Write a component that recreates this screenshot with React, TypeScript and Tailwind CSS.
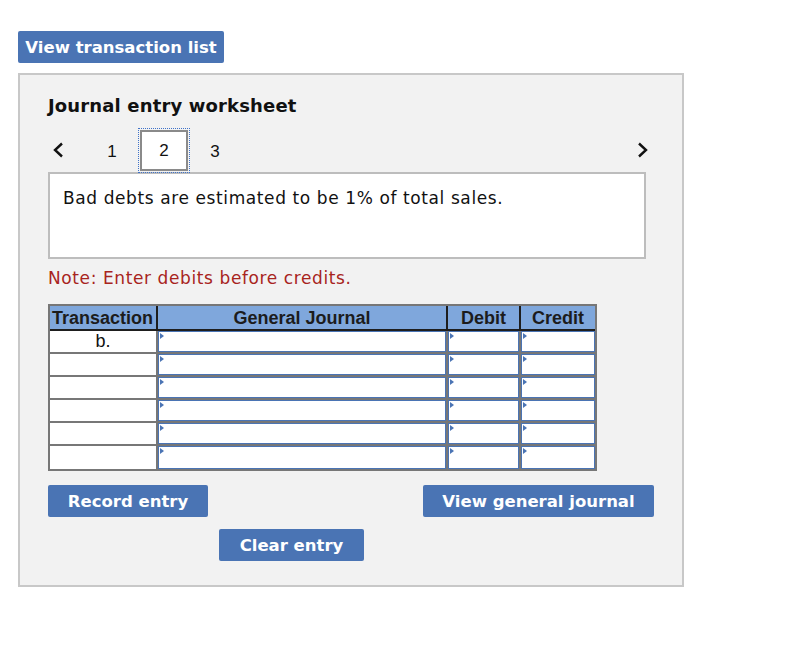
import React from "react";

function Chevron({ dir }: { dir: "left" | "right" }) {
  return (
    <svg width="12" height="16" viewBox="0 0 12 16" className="block">
      <path
        d={dir === "left" ? "M10 1.5 L3 8 L10 14.5" : "M2 1.5 L9 8 L2 14.5"}
        fill="none"
        stroke="#111"
        strokeWidth="2.4"
      />
    </svg>
  );
}

function InputCell({ w, last }: { w: string; last?: boolean }) {
  return (
    <div className={`${w} h-full bg-white ${last ? "" : "border-r-2 border-[#777]"}`}>
      <div className="relative h-full border border-[#4a74b4]">
        <span className="absolute left-[1px] top-[1px] w-0 h-0 border-y-[3px] border-y-transparent border-l-[4px] border-l-[#4a74b4]" />
      </div>
    </div>
  );
}

const rows = ["b.", "", "", "", "", ""];

export default function App() {
  return (
    <div className="min-h-[660px] w-[794px] bg-white pt-[31px] pl-[18px] font-['DejaVu_Sans',sans-serif] text-[#111]">
      <button className="h-[32px] w-[206px] rounded-[2px] bg-[#4a74b4] pt-[2px] text-[16.5px] font-bold text-white">
        View transaction list
      </button>

      <div className="mt-[10px] h-[514px] w-[666px] border-2 border-[#c8c8c8] bg-[#f2f2f2] pl-[28px] pt-[21px]">
        <h2 className="text-[18px] font-bold leading-[20px] tracking-[0.15px]">Journal entry worksheet</h2>

        {/* step nav */}
        <div className="mt-[12px] flex h-[44px] w-[600px] items-center">
          <div className="ml-[4px]">
            <Chevron dir="left" />
          </div>
          <div className="ml-[22px] flex items-center font-['Liberation_Sans',sans-serif] text-[17px]">
            <div className="flex w-[52px] justify-center pt-[3px]">1</div>
            <div className="border border-dotted border-[#3f72c8] p-[1px]">
              <div className="flex h-[41px] w-[48px] items-center justify-center border-2 border-[#8a8a8a] bg-white pt-[2px]">2</div>
            </div>
            <div className="flex w-[50px] justify-center pt-[3px]">3</div>
          </div>
          <div className="ml-auto mr-[-1px]">
            <Chevron dir="right" />
          </div>
        </div>

        <div className="h-[87px] w-[598px] border-2 border-[#bdbdbd] bg-white pl-[13px] pt-[12px] text-[17px] tracking-[0.6px]">
          Bad debts are estimated to be 1% of total sales.
        </div>

        <p className="mt-[8px] text-[17px] leading-[22px] tracking-[0.6px] text-[#a8241d]">Note: Enter debits before credits.</p>

        {/* journal table */}
        <div className="mt-[15px] w-[549px] border-2 border-[#777] font-['Liberation_Sans',sans-serif] text-[18px]">
          <div className="flex h-[25px] border-b-2 border-[#1e1e1e] bg-[#7fa7dc] font-bold leading-[24px] text-[#1c1c1c]">
            <div className="w-[108px] border-r-2 border-[#1e1e1e] pl-[2px]">Transaction</div>
            <div className="w-[290px] border-r-2 border-[#1e1e1e] text-center">General Journal</div>
            <div className="w-[73px] border-r-2 border-[#1e1e1e] text-center">Debit</div>
            <div className="flex-1 text-center">Credit</div>
          </div>
          {rows.map((t, i) => (
            <div
              key={i}
              className={`flex h-[23px] ${i < rows.length - 1 ? "border-b-2 border-[#777]" : "h-[21px]"}`}
            >
              <div className="w-[108px] border-r-2 border-[#777] bg-white text-center leading-[20px]">{t}</div>
              <InputCell w="w-[290px]" />
              <InputCell w="w-[73px]" />
              <InputCell w="flex-1" last />
            </div>
          ))}
        </div>

        {/* actions */}
        <div className="mt-[14px] flex w-[606px] justify-between">
          <button className="h-[32px] w-[160px] rounded-[2px] bg-[#4a74b4] pt-[2px] text-[16.5px] font-bold text-white">
            Record entry
          </button>
          <button className="h-[32px] w-[231px] rounded-[2px] bg-[#4a74b4] pt-[2px] text-[16.5px] font-bold text-white">
            View general journal
          </button>
        </div>
        <div className="mt-[12px] pl-[171px]">
          <button className="h-[32px] w-[145px] rounded-[2px] bg-[#4a74b4] pt-[2px] text-[16.5px] font-bold text-white">
            Clear entry
          </button>
        </div>
      </div>
    </div>
  );
}
